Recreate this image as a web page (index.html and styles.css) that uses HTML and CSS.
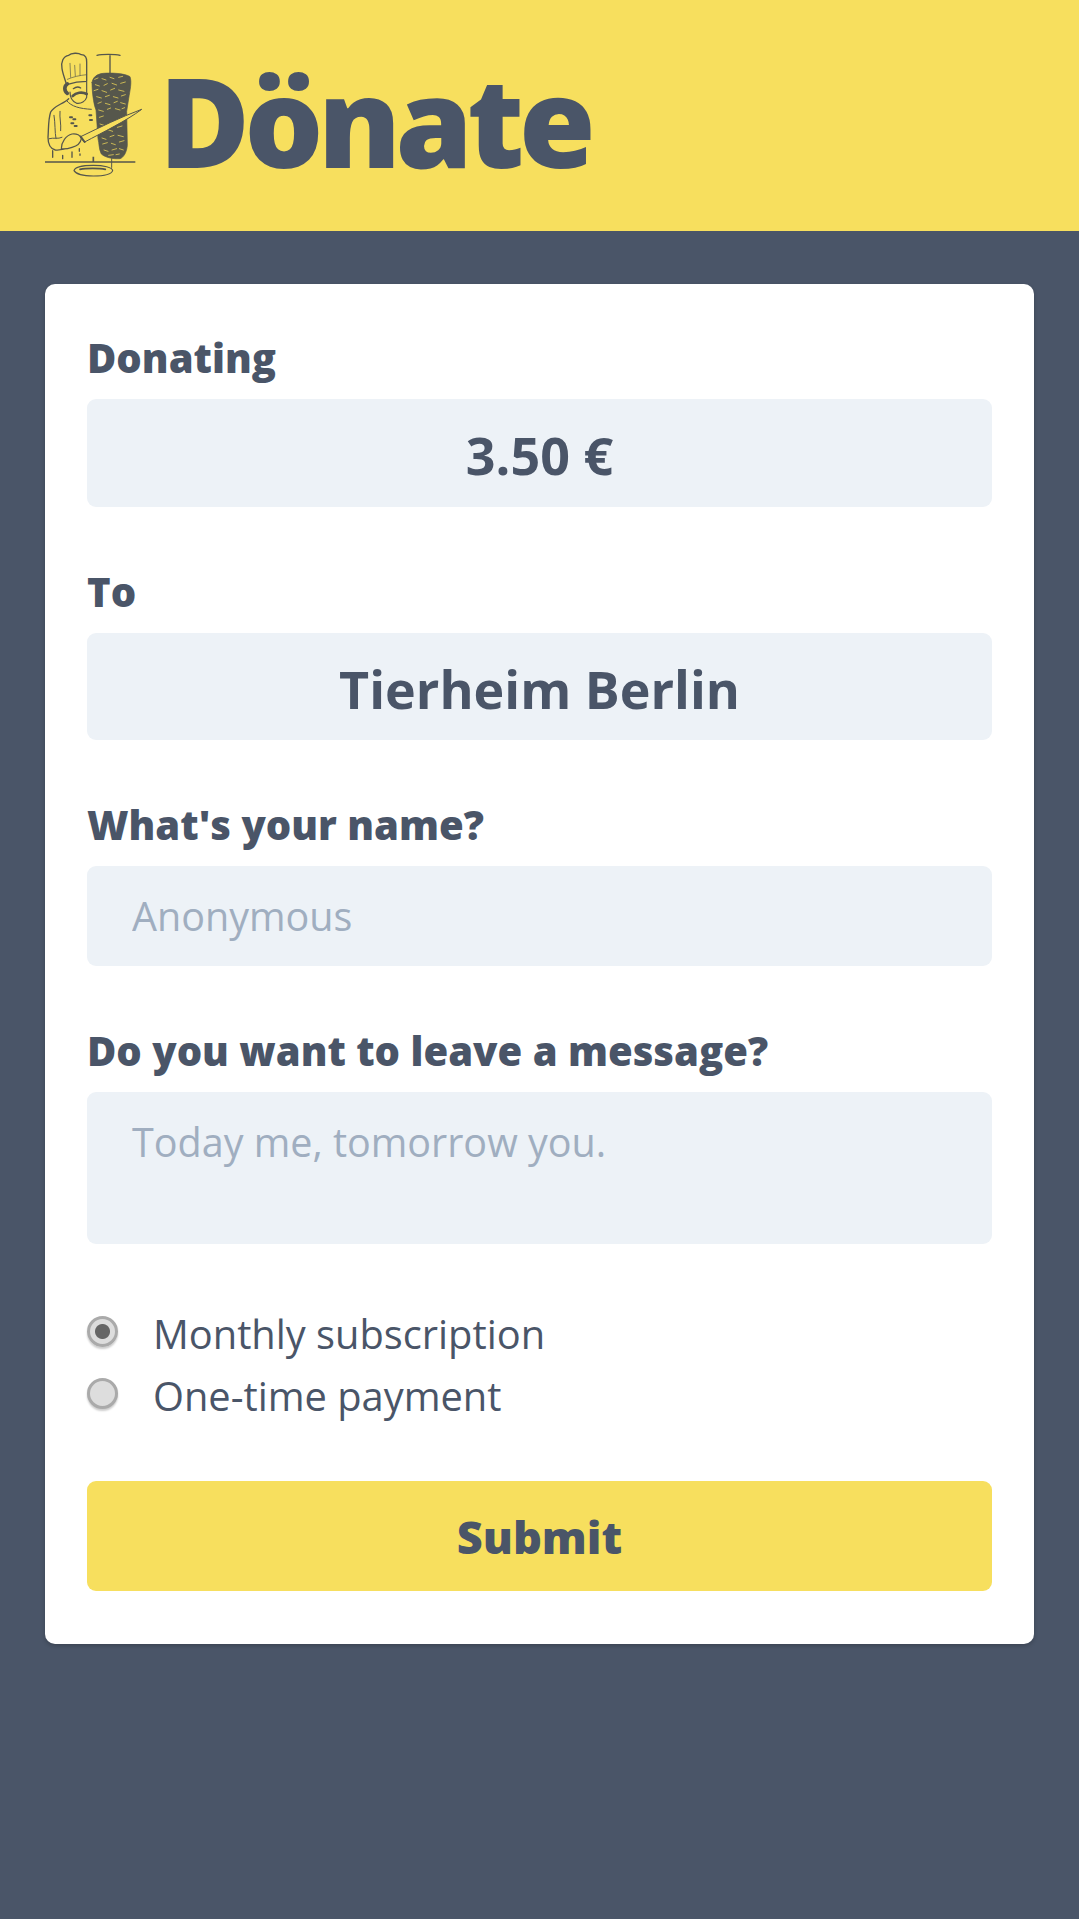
FILE: index.html
```html
<!DOCTYPE html>
<html lang="en">

<head>
    <meta charset="UTF-8">
    <meta name="viewport" content="width=device-width, initial-scale=1.0">
    <link rel="stylesheet" href="styles.css">
    <title>Dönate</title>
</head>

<body>
    <header class="top">
        <svg class="logo" viewBox="0 0 360 450" fill="none" stroke="#55564c" stroke-width="3.5" stroke-linecap="round" stroke-linejoin="round">
            <!-- hat -->
            <path d="M110 134 C104 116 98 100 96 86 C92 66 100 48 116 46 C124 38 146 38 154 44 C166 44 171 54 170 66 L170 124 C150 124 128 128 110 134 Z" stroke-width="4" />
            <path d="M112 118 C130 110 150 106 170 104 M122 112 L120 70 M136 108 L134 76 M150 106 L150 72" stroke-width="2" />
            <!-- head -->
            <path d="M112 132 C102 138 102 152 112 160" stroke-width="11" />
            <path d="M120 156 C120 170 126 184 140 190 C154 192 166 184 170 172 L170 126" />
            <path d="M130 146 C138 140 146 140 152 144" stroke-width="4" />
            <path d="M128 168 C138 158 156 154 170 162" stroke-width="8" />
            <!-- coat -->
            <path d="M116 176 C100 192 74 196 62 216 C54 240 56 268 54 292 C54 312 58 326 76 330 C92 332 104 326 112 322" stroke-width="4" />
            <path d="M110 182 C124 200 150 206 184 208 M72 226 C76 250 74 276 78 296 M90 214 C88 234 94 252 92 272 M58 296 C70 292 84 298 96 292" stroke-width="3" />
            <path d="M120 232 h6 M130 238 h6 M124 250 h6 M134 258 h6 M178 226 h6 M180 240 h6" stroke-width="6" />
            <!-- hand -->
            <path d="M94 326 C94 306 108 286 126 282 C140 280 152 286 154 296 C152 308 142 318 126 322 C114 326 104 328 94 326 Z" fill="#f7df5e" />
            <path d="M68 332 V352 M98 346 V356 M126 336 V352 M148 326 V334 M150 342 V346" stroke-width="4" />
            <!-- spit -->
            <path d="M201 46 C215 42 255 42 270 46 M240 45 V102" stroke-width="4" />
            <!-- meat -->
            <path d="M186 128 C188 112 200 102 220 100 C245 98 285 100 300 110 C306 126 300 150 296 176 L290 214 L292 316 C290 336 282 352 270 356 C250 358 224 352 214 342 C206 326 208 310 204 296 L198 210 C190 190 186 152 186 128 Z" fill="#56574c" stroke-width="2" />
            <path d="M194 118 l10 -4 M216 116 l12 4 M240 112 l12 4 M266 112 l12 -3 M196 134 l12 4 M222 136 l10 -5 M246 130 l14 5 M272 130 l14 -4 M192 152 l12 -4 M216 152 l14 5 M242 150 l12 -5 M266 150 l16 4 M200 170 l14 4 M226 170 l12 -4 M250 170 l14 4 M274 168 l12 -4 M204 190 l10 -4 M226 190 l14 4 M252 188 l10 -4 M272 188 l14 4 M206 210 l14 4 M232 208 l10 -4 M256 206 l14 4 M276 206 l8 -3 M208 232 l12 -4 M210 252 l12 4 M212 274 l12 -4 M236 270 l12 4 M262 262 l14 -4 M216 294 l12 4 M240 290 l12 -4 M264 286 l16 4 M218 312 l14 -4 M244 310 l12 4 M268 306 l14 -4 M222 330 l12 4 M246 330 l14 -4 M268 326 l12 4 M236 346 l14 -2 M258 344 l10 -2" stroke="#c9b755" stroke-width="3" />
            <!-- knife -->
            <path d="M152 290 C210 262 270 232 335 208 C290 242 220 276 164 306 Z" fill="#f7df5e" stroke-width="3" />
            <path d="M152 290 L164 306" stroke-width="6" />
            <!-- counter and plate -->
            <path d="M45 366 H316 M190 350 V364" stroke-width="5" stroke-linecap="butt" />
            <path d="M245 356 V382 C245 386 242 390 238 392" stroke-width="3" />
            <path d="M132 392 C134 382 158 376 190 376 C220 376 248 382 248 392 C244 404 214 408 190 408 C160 408 138 402 132 392 Z" fill="#f7df5e" />
            <path d="M150 388 C168 384 208 384 226 388" stroke-width="5" />
        </svg>
        <h1 class="brand">Dönate</h1>
    </header>

    <main class="page">
        <form class="card">
            <div class="field">
                <label class="label">Donating</label>
                <div class="value">3.50 €</div>
            </div>
            <div class="field">
                <label class="label">To</label>
                <div class="value">Tierheim Berlin</div>
            </div>
            <div class="field">
                <label class="label" for="name">What's your name?</label>
                <input class="input" id="name" type="text" placeholder="Anonymous">
            </div>
            <div class="field">
                <label class="label" for="message">Do you want to leave a message?</label>
                <textarea class="input area" id="message" placeholder="Today me, tomorrow you."></textarea>
            </div>
            <div class="choices">
                <label class="choice"><input class="radio" type="radio" name="kind" checked>Monthly subscription</label>
                <label class="choice"><input class="radio" type="radio" name="kind">One-time payment</label>
            </div>
            <button class="submit" type="button">Submit</button>
        </form>
    </main>
</body>

</html>
```

FILE: styles.css
```css
* {
    margin: 0;
    padding: 0;
    box-sizing: border-box;
}

body {
    min-height: 1919px;
    background-color: #4a5568;
    color: #4a5568;
    font-family: "Open Sans", "Noto Sans", sans-serif;
}

.top {
    height: 231px;
    padding: 40px 30px 0;
    background-color: #f7df5e;
    display: flex;
    align-items: flex-start;
}

.logo {
    width: 120px;
    height: 150px;
    flex: none;
}

.brand {
    margin-left: 9px;
    padding-top: 10px;
    font-size: 124px;
    line-height: 140px;
    font-weight: 800;
    letter-spacing: -5.5px;
}

.page {
    padding: 53px 45px 0;
}

.card {
    padding: 42px 42px 53px;
    background-color: #fff;
    border-radius: 10px;
    box-shadow: 0 2px 4px rgba(0, 0, 0, 0.2);
}

.field {
    margin-bottom: 53px;
}

.label {
    display: block;
    padding-top: 7px;
    margin-bottom: 16px;
    font-size: 40px;
    line-height: 50px;
    font-weight: 800;
}

.value {
    height: 107.5px;
    background-color: #edf2f7;
    border-radius: 9px;
    font-size: 52px;
    line-height: 112px;
    font-weight: 700;
    text-align: center;
}

.input {
    display: block;
    width: 100%;
    height: 100px;
    padding: 0 45px;
    background-color: #edf2f7;
    border: 0;
    border-radius: 9px;
    color: #4a5568;
    font-family: inherit;
    font-size: 39.5px;
    font-weight: 400;
    resize: none;
}

.input::placeholder {
    color: #a0aec0;
    opacity: 1;
}

.area {
    height: 152px;
    padding: 25px 45px;
    line-height: 50px;
}

.choices {
    padding-top: 5px;
    margin-bottom: 55px;
}

.choice {
    display: flex;
    align-items: center;
    height: 62px;
    font-size: 39.8px;
    font-weight: 400;
}

.radio {
    appearance: none;
    width: 31px;
    height: 31px;
    margin: -3px 35px 0 0;
    background-color: #ddd;
    border: 3px solid #aaa;
    border-radius: 50%;
    box-shadow: 0 2px 2px rgba(0, 0, 0, 0.2);
}

.radio:checked {
    background: radial-gradient(circle, #666 0 7px, #ddd 8px);
}

.submit {
    display: block;
    width: 100%;
    height: 110px;
    background-color: #f7df5e;
    border: 0;
    border-radius: 9px;
    color: #4a5568;
    font-family: inherit;
    font-size: 45px;
    font-weight: 800;
}
```
